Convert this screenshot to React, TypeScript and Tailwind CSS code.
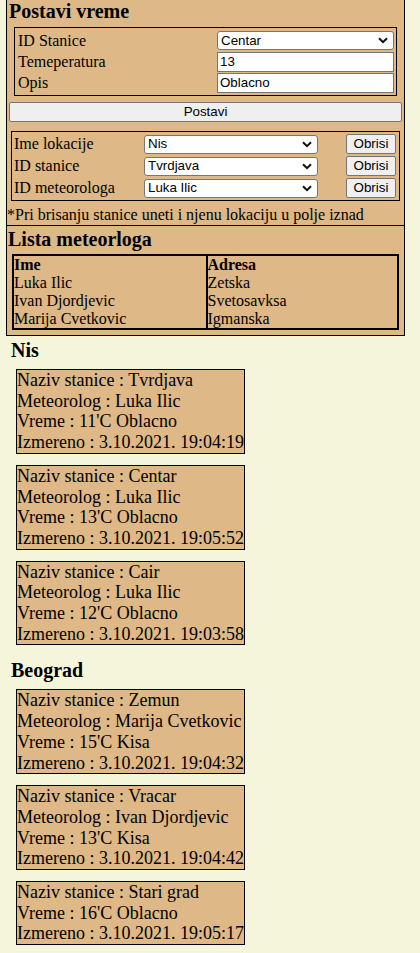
import React from "react";

const serif = "font-['Liberation_Serif','Times_New_Roman',serif]";
const sans = "font-['Liberation_Sans',Arial,sans-serif]";

const stanice = [
  {
    grad: "Nis",
    lista: [
      { naziv: "Tvrdjava", meteorolog: "Luka Ilic", vreme: "11'C Oblacno", izmereno: "3.10.2021. 19:04:19" },
      { naziv: "Centar", meteorolog: "Luka Ilic", vreme: "13'C Oblacno", izmereno: "3.10.2021. 19:05:52" },
      { naziv: "Cair", meteorolog: "Luka Ilic", vreme: "12'C Oblacno", izmereno: "3.10.2021. 19:03:58" },
    ],
  },
  {
    grad: "Beograd",
    lista: [
      { naziv: "Zemun", meteorolog: "Marija Cvetkovic", vreme: "15'C Kisa", izmereno: "3.10.2021. 19:04:32" },
      { naziv: "Vracar", meteorolog: "Ivan Djordjevic", vreme: "13'C Kisa", izmereno: "3.10.2021. 19:04:42" },
      { naziv: "Stari grad", meteorolog: "", vreme: "16'C Oblacno", izmereno: "3.10.2021. 19:05:17" },
    ],
  },
];

const meteorolozi = [
  { ime: "Luka Ilic", adresa: "Zetska" },
  { ime: "Ivan Djordjevic", adresa: "Svetosavksa" },
  { ime: "Marija Cvetkovic", adresa: "Igmanska" },
];

const Chevron = () => (
  <svg width="10" height="7" viewBox="0 0 10 7" className="shrink-0">
    <path d="M1 1.2 L5 5.2 L9 1.2" fill="none" stroke="#111" strokeWidth="2" />
  </svg>
);

const Select = ({ value, width }: { value: string; width: string }) => (
  <div
    className={`${width} h-[19px] flex items-center justify-between bg-white border border-[#767676] rounded-[3px] pl-[3px] pr-[5px] ${sans} text-[13.33px] leading-none text-black`}
  >
    <span>{value}</span>
    <Chevron />
  </div>
);

const Input = ({ value }: { value: string }) => (
  <div
    className={`w-[177px] h-[20px] flex items-center bg-white border border-[#767676] px-[2px] ${sans} text-[13.33px] leading-none text-black`}
  >
    {value}
  </div>
);

const Dugme = ({ children, className }: { children: React.ReactNode; className: string }) => (
  <div
    className={`flex items-center justify-center bg-[#efefef] border border-[#767676] rounded-[2px] ${sans} text-[13.33px] leading-none text-black ${className}`}
  >
    {children}
  </div>
);

const App = () => {
  return (
    <div className={`min-h-[953px] bg-[#f5f5dc] ${serif} text-black pt-0 pb-2`}>
      {/* Postavi vreme */}
      <div className="ml-[6px] w-[399px] bg-[#deb887] border-x border-b border-black">
        <h3 className="pl-[2px] text-[20px] font-bold leading-[23px]">Postavi vreme</h3>
        <div className="mx-[7px] mt-[4px] border border-black py-[2px] pl-[3px]">
          <div className="flex items-center h-[21px]">
            <div className="w-[199px] text-[16px] leading-[18px]">ID Stanice</div>
            <Select value="Centar" width="w-[177px]" />
          </div>
          <div className="flex items-center h-[21px]">
            <div className="w-[199px] text-[16px] leading-[18px]">Temeperatura</div>
            <Input value="13" />
          </div>
          <div className="flex items-center h-[21px]">
            <div className="w-[199px] text-[16px] leading-[18px]">Opis</div>
            <Input value="Oblacno" />
          </div>
        </div>
        <Dugme className="mx-[2px] mt-[6px] h-[20px]">Postavi</Dugme>

        <div className="ml-[4px] mr-[4px] mt-[9px] border border-black py-[1px] pl-[2px]">
          {[
            ["Ime lokacije", "Nis"],
            ["ID stanice", "Tvrdjava"],
            ["ID meteorologa", "Luka Ilic"],
          ].map(([label, value]) => (
            <div key={label} className="flex items-center h-[22px]">
              <div className="w-[130px] text-[16px] leading-[18px]">{label}</div>
              <Select value={value} width="w-[174px]" />
              <Dugme className="ml-[28px] w-[50px] h-[20px]">Obrisi</Dugme>
            </div>
          ))}
        </div>
        <p className="mt-[3px] text-[16px] leading-[21px]">
          *Pri brisanju stanice uneti i njenu lokaciju u polje iznad
        </p>
      </div>

      {/* Lista meteorloga */}
      <div className="ml-[6px] w-[399px] bg-[#deb887] border-x border-b border-black pb-[5px]">
        <h3 className="pl-[1px] text-[20px] font-bold leading-[23px] pt-[2px]">Lista meteorloga</h3>
        <div className="mx-[5px] mt-[3px] border-2 border-black grid grid-cols-2 text-[16px] leading-[18px]">
          <div>
            <div className="font-bold">Ime</div>
            {meteorolozi.map((m) => (
              <div key={m.ime}>{m.ime}</div>
            ))}
          </div>
          <div className="border-l-2 border-black">
            <div className="font-bold">Adresa</div>
            {meteorolozi.map((m) => (
              <div key={m.adresa}>{m.adresa}</div>
            ))}
          </div>
        </div>
      </div>

      {/* Stanice po lokacijama */}
      {stanice.map((s, i) => (
        <div key={s.grad} className={i === 0 ? "mt-[3px]" : "pt-[3px]"}>
          <h3 className="ml-[11px] text-[20px] font-bold leading-[23px] mb-[7px]">{s.grad}</h3>
          {s.lista.map((st) => (
            <div
              key={st.naziv}
              className="ml-[16px] w-[229px] mb-[11px] bg-[#deb887] border border-black text-[18px] leading-[20.7px]"
            >
              <div>Naziv stanice : {st.naziv}</div>
              {st.meteorolog && <div>Meteorolog : {st.meteorolog}</div>}
              <div>Vreme : {st.vreme}</div>
              <div>Izmereno : {st.izmereno}</div>
            </div>
          ))}
        </div>
      ))}
    </div>
  );
};

export default App;
